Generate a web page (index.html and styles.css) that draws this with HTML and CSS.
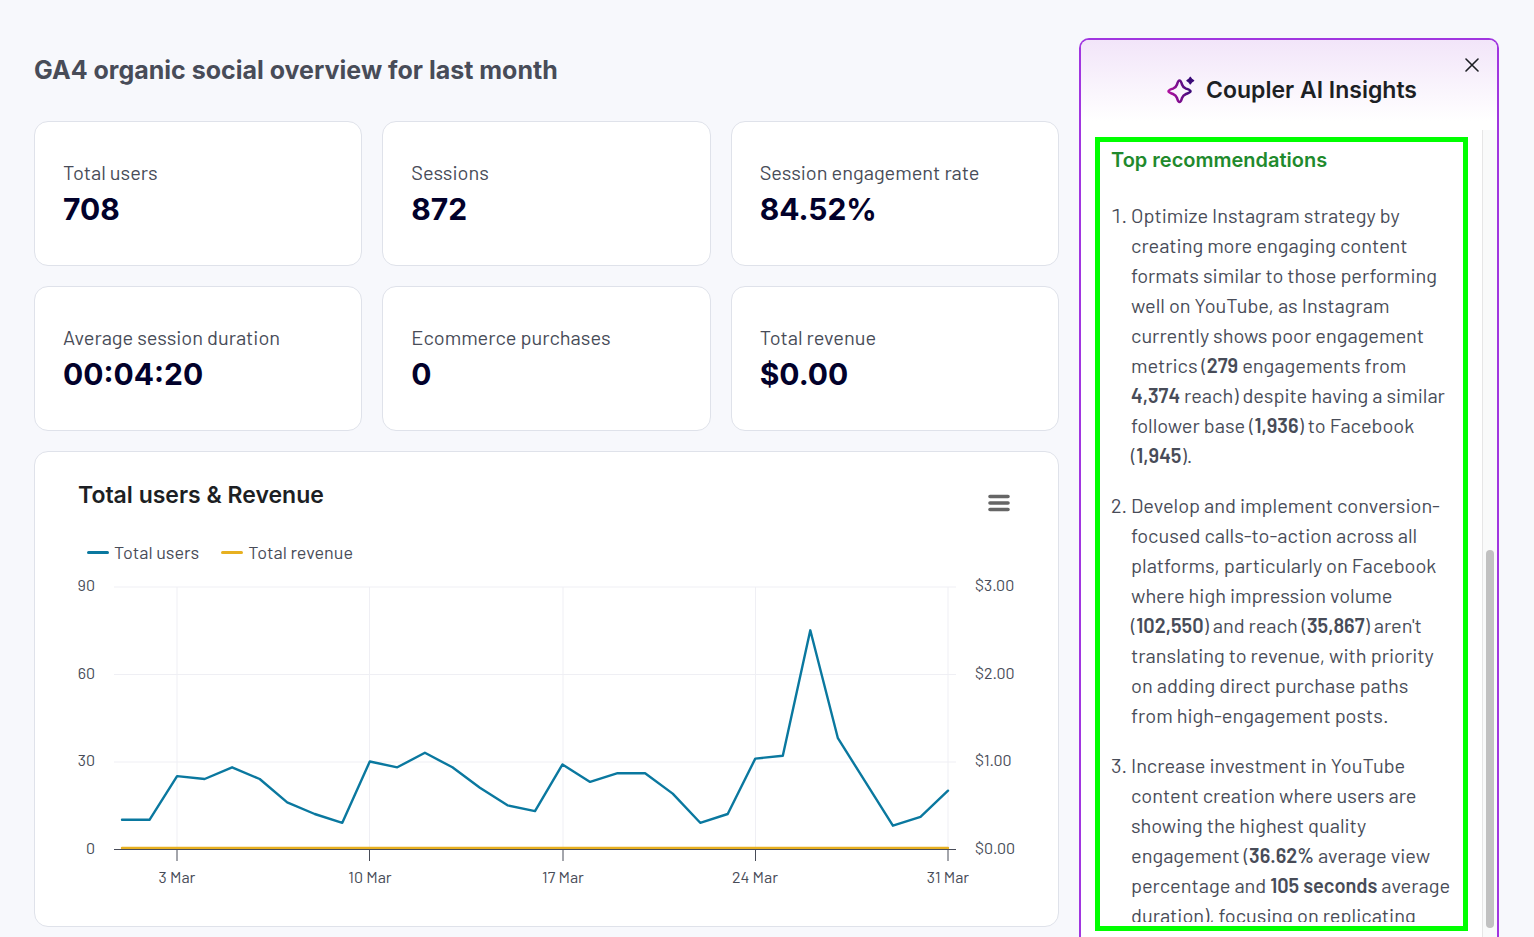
FILE: index.html
```html
<!DOCTYPE html>
<html lang="en">
<head>
  <meta charset="UTF-8">
  <meta name="viewport" content="width=device-width, initial-scale=1.0">
  <title>GA4 organic social overview</title>
  <link rel="stylesheet" href="styles.css">
</head>
<body>

  <div class="page">
    <!-- Dashboard -->
    <main class="dashboard">
      <h1>GA4 organic social overview for last month</h1>

      <div class="stats">
        <div class="card stat">
          <p class="stat-label">Total users</p>
          <p class="stat-value">708</p>
        </div>
        <div class="card stat">
          <p class="stat-label">Sessions</p>
          <p class="stat-value">872</p>
        </div>
        <div class="card stat">
          <p class="stat-label">Session engagement rate</p>
          <p class="stat-value">84.52%</p>
        </div>
        <div class="card stat">
          <p class="stat-label">Average session duration</p>
          <p class="stat-value">00:04:20</p>
        </div>
        <div class="card stat">
          <p class="stat-label">Ecommerce purchases</p>
          <p class="stat-value">0</p>
        </div>
        <div class="card stat">
          <p class="stat-label">Total revenue</p>
          <p class="stat-value">$0.00</p>
        </div>
      </div>

      <section class="card chart-card">
        <div class="chart-head">
          <h2>Total users &amp; Revenue</h2>
          <button class="menu-btn" type="button" aria-label="Chart menu">
            <svg width="22" height="18" viewBox="0 0 22 18">
              <path d="M2 2.5H20M2 9H20M2 15.5H20" stroke="#666" stroke-width="3.6" stroke-linecap="round"/>
            </svg>
          </button>
        </div>

        <div class="legend">
          <span class="legend-item users">Total users</span>
          <span class="legend-item revenue">Total revenue</span>
        </div>

        <svg class="chart" viewBox="0 0 937 320" role="img" aria-label="Total users and revenue by day">
          <g class="grid">
            <path d="M36 15H878M36 102.5H878M36 190H878"/>
            <path d="M99 15V277M291.5 15V277M485 15V277M677.5 15V277M870 15V277"/>
          </g>
          <polyline id="usersLine" class="line users-line" points=""/>
          <path class="line revenue-line" d="M44 276H870"/>
          <path class="axis" d="M36 277.5H878M99 277V289M291.5 277V289M485 277V289M677.5 277V289M870 277V289"/>
          <g class="ticks" text-anchor="end">
            <text x="17" y="19">90</text>
            <text x="17" y="107">60</text>
            <text x="17" y="194">30</text>
            <text x="17" y="282">0</text>
          </g>
          <g class="ticks">
            <text x="897" y="19">$3.00</text>
            <text x="897" y="107">$2.00</text>
            <text x="897" y="194">$1.00</text>
            <text x="897" y="282">$0.00</text>
          </g>
          <g class="ticks" text-anchor="middle">
            <text x="99" y="311">3 Mar</text>
            <text x="292" y="311">10 Mar</text>
            <text x="485" y="311">17 Mar</text>
            <text x="677" y="311">24 Mar</text>
            <text x="870" y="311">31 Mar</text>
          </g>
        </svg>
      </section>
    </main>

    <!-- AI panel -->
    <aside class="panel">
      <div class="panel-head">
        <svg class="sparkle" width="28" height="28" viewBox="0 0 28 28">
          <defs>
            <linearGradient id="spark" x1="0" y1="0.6" x2="1" y2="0.4">
              <stop offset="0" stop-color="#b0129f"/>
              <stop offset="1" stop-color="#3b0a78"/>
            </linearGradient>
          </defs>
          <path d="M12.5 4.5C14 4.5 14.3 6.5 15 8.5C15.8 11 16.5 11.7 19 12.6C21.5 13.5 23.5 14 23.5 15.3C23.5 16.6 21.5 17 19 18C16.5 19 15.8 19.8 15 22C14.3 24 14 26 12.5 26C11 26 10.7 24 10 22C9.2 19.8 8.5 19 6 18C3.5 17 1.5 16.6 1.5 15.3C1.5 14 3.5 13.5 6 12.6C8.5 11.7 9.2 11 10 8.5C10.7 6.5 11 4.5 12.5 4.5Z" fill="none" stroke="url(#spark)" stroke-width="2.5"/>
          <path d="M23.3 1.2Q24.3 3.6 26.7 4.6Q24.3 5.6 23.3 8Q22.3 5.6 19.9 4.6Q22.3 3.6 23.3 1.2Z" fill="#3b0a78" stroke="#3b0a78" stroke-width="1.2" stroke-linejoin="round"/>
        </svg>
        <h2>Coupler AI Insights</h2>
        <button class="close-btn" type="button" aria-label="Close">
          <svg width="14" height="14" viewBox="0 0 14 14">
            <path d="M1 1L13 13M13 1L1 13" stroke="#1d1f24" stroke-width="1.6" stroke-linecap="round"/>
          </svg>
        </button>
      </div>

      <div class="panel-body">
        <div class="highlight">
          <div class="insights">
            <h3>Top recommendations</h3>
            <ol>
              <li>Optimize Instagram strategy by creating more engaging content formats similar to those performing well on YouTube, as Instagram currently shows poor engagement metrics (<b>279</b> engagements from <b>4,374</b> reach) despite having a similar follower base (<b>1,936</b>) to Facebook (<b>1,945</b>).</li>
              <li>Develop and implement conversion-focused calls-to-action across all platforms, particularly on Facebook where high impression volume (<b>102,550</b>) and reach (<b>35,867</b>) aren't translating to revenue, with priority on adding direct purchase paths from high-engagement posts.</li>
              <li>Increase investment in YouTube content creation where users are showing the highest quality engagement (<b>36.62%</b> average view percentage and <b>105 seconds</b> average duration), focusing on replicating</li>
            </ol>
          </div>
        </div>
        <div class="scroll-track"><div class="scroll-thumb"></div></div>
      </div>
    </aside>
  </div>

  <script>
    // users per day, 1 - 31 March
    const users = [10, 10, 25, 24, 28, 24, 16, 12, 9, 30, 28, 33, 28, 21, 15, 13,
      29, 23, 26, 26, 19, 9, 12, 31, 32, 75, 38, 23, 8, 11, 20];

    const points = users.map((value, i) => {
      const x = 44 + i * (826 / 30);
      const y = 277 - value * (262.5 / 90);
      return x.toFixed(1) + "," + y.toFixed(1);
    });
    document.getElementById("usersLine").setAttribute("points", points.join(" "));
  </script>

</body>
</html>
```
FILE: styles.css
```css
:root {
  --bg: #f7f8fc;
  --text: #484c58;
  --dark: #1d1f24;
  --border: #dfe2ea;
  --purple: #a136e0;
}

* {
  box-sizing: border-box;
}

body {
  margin: 0;
  background: var(--bg);
  color: var(--text);
  font-family: Barlow, Roboto, sans-serif;
  font-size: 20px;
}

h1, h2, h3, p, ol {
  margin: 0;
}

h1, h2, h3, .stat-value {
  font-family: Inter, sans-serif;
}

button {
  padding: 0;
  border: none;
  background: none;
  cursor: pointer;
}

button svg {
  display: block;
}

.page {
  display: flex;
  gap: 20px;
  height: 100vh;
  padding: 38px 35px 0 34px;
  overflow: hidden;
}

.dashboard {
  flex: 1;
  min-width: 0;
}

h1 {
  padding: 16px 0 35px;
  font-size: 25px;
  font-weight: 700;
  line-height: 32px;
}

.card {
  background: #fff;
  border: 1px solid var(--border);
  border-radius: 14px;
}

/* Stat cards */
.stats {
  display: grid;
  grid-template-columns: repeat(3, 1fr);
  gap: 20px;
}

.stat {
  padding: 36px 28px 33px;
}

.stat-label {
  line-height: 28px;
}

.stat-value {
  color: #02012b;
  font-size: 30px;
  font-weight: 700;
  line-height: 46px;
}

/* Chart */
.chart-card {
  margin-top: 20px;
  padding: 28px 43px 34px;
}

.chart-head {
  display: flex;
  justify-content: space-between;
  align-items: flex-start;
}

.chart-head h2 {
  color: var(--dark);
  font-size: 23px;
  font-weight: 600;
  line-height: 30px;
}

.menu-btn {
  margin: 14px 5px 0 0;
}

.legend {
  display: flex;
  gap: 22px;
  padding: 28px 9px 0;
  font-size: 18px;
  line-height: 24px;
}

.legend-item {
  display: flex;
  align-items: center;
  gap: 5px;
}

.legend-item::before {
  content: "";
  width: 22px;
  height: 3px;
  border-radius: 2px;
  background: #0a789f;
}

.legend-item.revenue::before {
  background: #e7b020;
}

.chart {
  display: block;
  width: 100%;
  margin-top: 8px;
}

.chart path,
.chart polyline {
  fill: none;
}

.grid {
  stroke: #efeff4;
}

.line {
  stroke-width: 2.4;
  stroke-linejoin: round;
  stroke-linecap: round;
}

.users-line {
  stroke: #0a789f;
}

.revenue-line {
  stroke: #e7b020;
}

.axis {
  stroke: #484c58;
}

.ticks {
  fill: var(--text);
  font-size: 16px;
}

/* AI insights panel */
.panel {
  display: flex;
  flex-direction: column;
  width: 420px;
  background: #fff;
  border: 2px solid var(--purple);
  border-bottom: none;
  border-radius: 10px 10px 0 0;
}

.panel-head {
  position: relative;
  display: flex;
  align-items: center;
  justify-content: center;
  gap: 11px;
  height: 90px;
  padding: 10px 0 0 6px;
  border-radius: 8px 8px 0 0;
  background: linear-gradient(#f2e5f9, #fff 90%);
}

.panel-head h2 {
  color: var(--dark);
  font-size: 23px;
  font-weight: 600;
  line-height: 30px;
}

.close-btn {
  position: absolute;
  top: 18px;
  right: 18px;
}

.panel-body {
  display: flex;
  flex: 1;
  gap: 14px;
  min-height: 0;
  padding-left: 14px;
}

.highlight {
  flex: 1;
  margin: 7px 0 6px;
  padding: 0 11px 4px;
  border: 5px solid #00ff00;
}

.insights {
  height: 100%;
  overflow: hidden;
}

.insights h3 {
  color: #1f8a2d;
  font-size: 20px;
  font-weight: 600;
  line-height: 36px;
}

.insights ol {
  padding: 22px 0 0 20px;
  line-height: 30px;
}

.insights li {
  margin-bottom: 20px;
}

.insights b {
  font-weight: 600;
}

.scroll-track {
  display: flex;
  align-items: flex-end;
  width: 15px;
  padding: 0 3px 9px;
  background: #f9fafa;
  border-left: 1px solid #e6e6e6;
}

.scroll-thumb {
  width: 8px;
  height: 378px;
  border-radius: 4px;
  background: #c1c1c1;
}
```
